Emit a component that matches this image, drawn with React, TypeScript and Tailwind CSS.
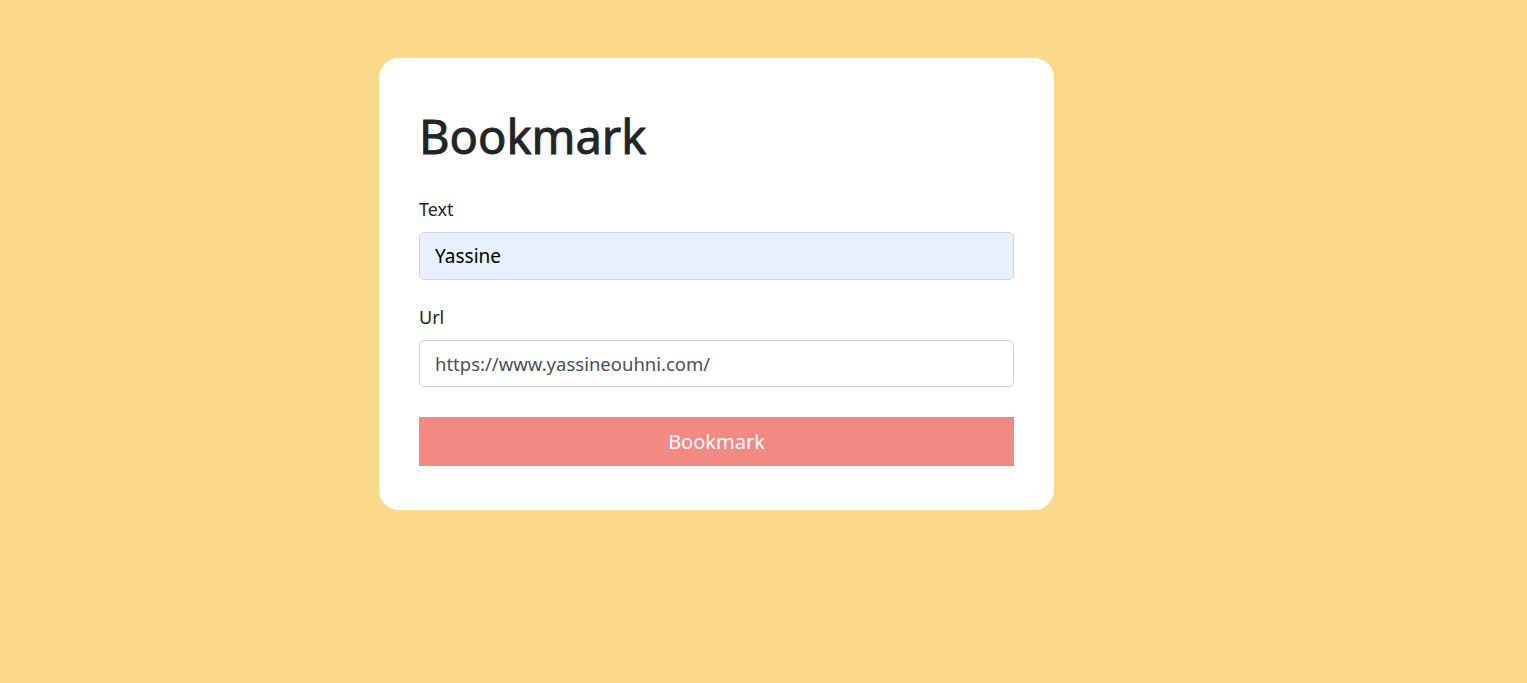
import React from "react";

export default function App() {
  return (
    <div
      className="min-h-[683px] w-full bg-[#fad98a] pl-[379px] pt-[58px] text-[#212529]"
      style={{ fontFamily: '"Noto Sans", "Open Sans", sans-serif' }}
    >
      <div className="flex w-[675px] flex-col rounded-[20px] bg-white px-[40px] pb-[44px] pt-[49px]">
        <h1 className="mb-[31px] text-[47px] font-normal leading-[58px] [-webkit-text-stroke:0.9px_#212529]">
          Bookmark
        </h1>
        <label className="mb-[10px] text-[18px] leading-[26px]">Text</label>
        <div className="flex h-[48px] items-center rounded-[5px] border border-[#ced4da] bg-[#e8f0fe] px-[15px] text-[19px] text-black">
          Yassine
        </div>
        <label className="mb-[10px] mt-[24px] text-[18px] leading-[26px]">Url</label>
        <div className="flex h-[47px] items-center rounded-[5px] border border-[#ced4da] bg-white px-[15px] text-[18.5px] text-[#495057]">
          https://www.yassineouhni.com/
        </div>
        <button className="mt-[30px] flex h-[49px] items-center justify-center bg-[#f28982] text-[20px] text-white">
          Bookmark
        </button>
      </div>
    </div>
  );
}
